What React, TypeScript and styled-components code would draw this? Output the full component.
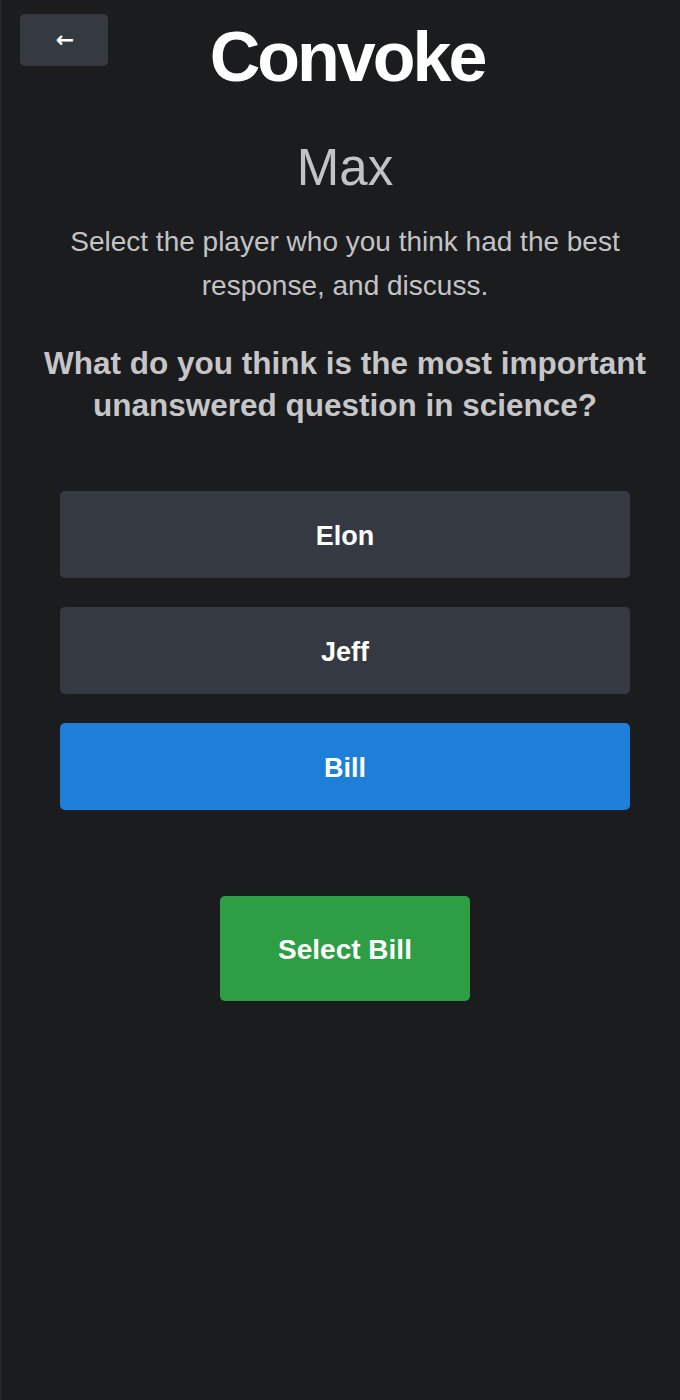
import React, { useState } from "react";
import styled, { createGlobalStyle } from "styled-components";

const Global = createGlobalStyle`
  html, body { margin: 0; padding: 0; background: #1b1c1e; }
  body { font-family: "Liberation Sans", Arial, sans-serif; }
  * { box-sizing: border-box; }
`;

const Page = styled.div`
  min-height: 1400px;
  background: #1b1c1e;
  border-left: 2px solid #242528;
  padding: 14px 0 40px 8px;
  display: flex;
  flex-direction: column;
  align-items: center;
`;

const Header = styled.header`
  position: relative;
  width: 100%;
  display: flex;
  justify-content: center;
  padding-left: 4px;
`;

const BackButton = styled.button`
  position: absolute;
  left: 10px;
  top: 0;
  width: 88px;
  height: 52px;
  border: none;
  border-radius: 5px;
  background: #353a41;
  color: #ffffff;
  font-family: "DejaVu Sans", sans-serif;
  font-size: 22px;
  font-weight: bold;
  display: flex;
  align-items: center;
  justify-content: center;
  padding: 0 0 2px 2px;
`;

const Title = styled.h1`
  margin: 8px 0 0;
  font-size: 70px;
  line-height: 70px;
  font-weight: 700;
  letter-spacing: -3px;
  color: #ffffff;
`;

const Player = styled.h2`
  margin: 46px 0 0;
  font-size: 51px;
  line-height: 60px;
  font-weight: 400;
  color: #c3c3c5;
`;

const Instructions = styled.p`
  margin: 22px 0 0;
  width: 600px;
  text-align: center;
  font-size: 28px;
  line-height: 44px;
  color: #c3c3c5;
`;

const Question = styled.h3`
  margin: 34px 0 0;
  width: 640px;
  text-align: center;
  font-size: 31.5px;
  line-height: 42px;
  font-weight: 700;
  color: #c6c6c8;
`;

const Choices = styled.div`
  margin-top: 65px;
  width: 570px;
  display: flex;
  flex-direction: column;
  gap: 29px;
`;

const Choice = styled.button<{ $selected?: boolean }>`
  height: 87px;
  border: none;
  border-radius: 5px;
  padding: 3px 0 0;
  background: ${(p) => (p.$selected ? "#1d7fd8" : "#353a42")};
  color: #ffffff;
  font-family: "Liberation Sans", Arial, sans-serif;
  font-size: 27px;
  font-weight: 700;
  cursor: pointer;
`;

const Confirm = styled.button`
  margin-top: 86px;
  width: 250px;
  height: 105px;
  border: none;
  border-radius: 5px;
  padding: 2px 0 0;
  background: #2e9e44;
  color: #ffffff;
  font-family: "Liberation Sans", Arial, sans-serif;
  font-size: 28px;
  font-weight: 700;
  cursor: pointer;
`;

const players = ["Elon", "Jeff", "Bill"];

export default function App() {
  const [selected, setSelected] = useState("Bill");
  return (
    <>
      <Global />
      <Page>
        <Header>
          <BackButton aria-label="Back">←</BackButton>
          <Title>Convoke</Title>
        </Header>
        <Player>Max</Player>
        <Instructions>
          Select the player who you think had the best response, and discuss.
        </Instructions>
        <Question>
          What do you think is the most important unanswered question in science?
        </Question>
        <Choices>
          {players.map((p) => (
            <Choice key={p} $selected={p === selected} onClick={() => setSelected(p)}>
              {p}
            </Choice>
          ))}
        </Choices>
        <Confirm>Select {selected}</Confirm>
      </Page>
    </>
  );
}
